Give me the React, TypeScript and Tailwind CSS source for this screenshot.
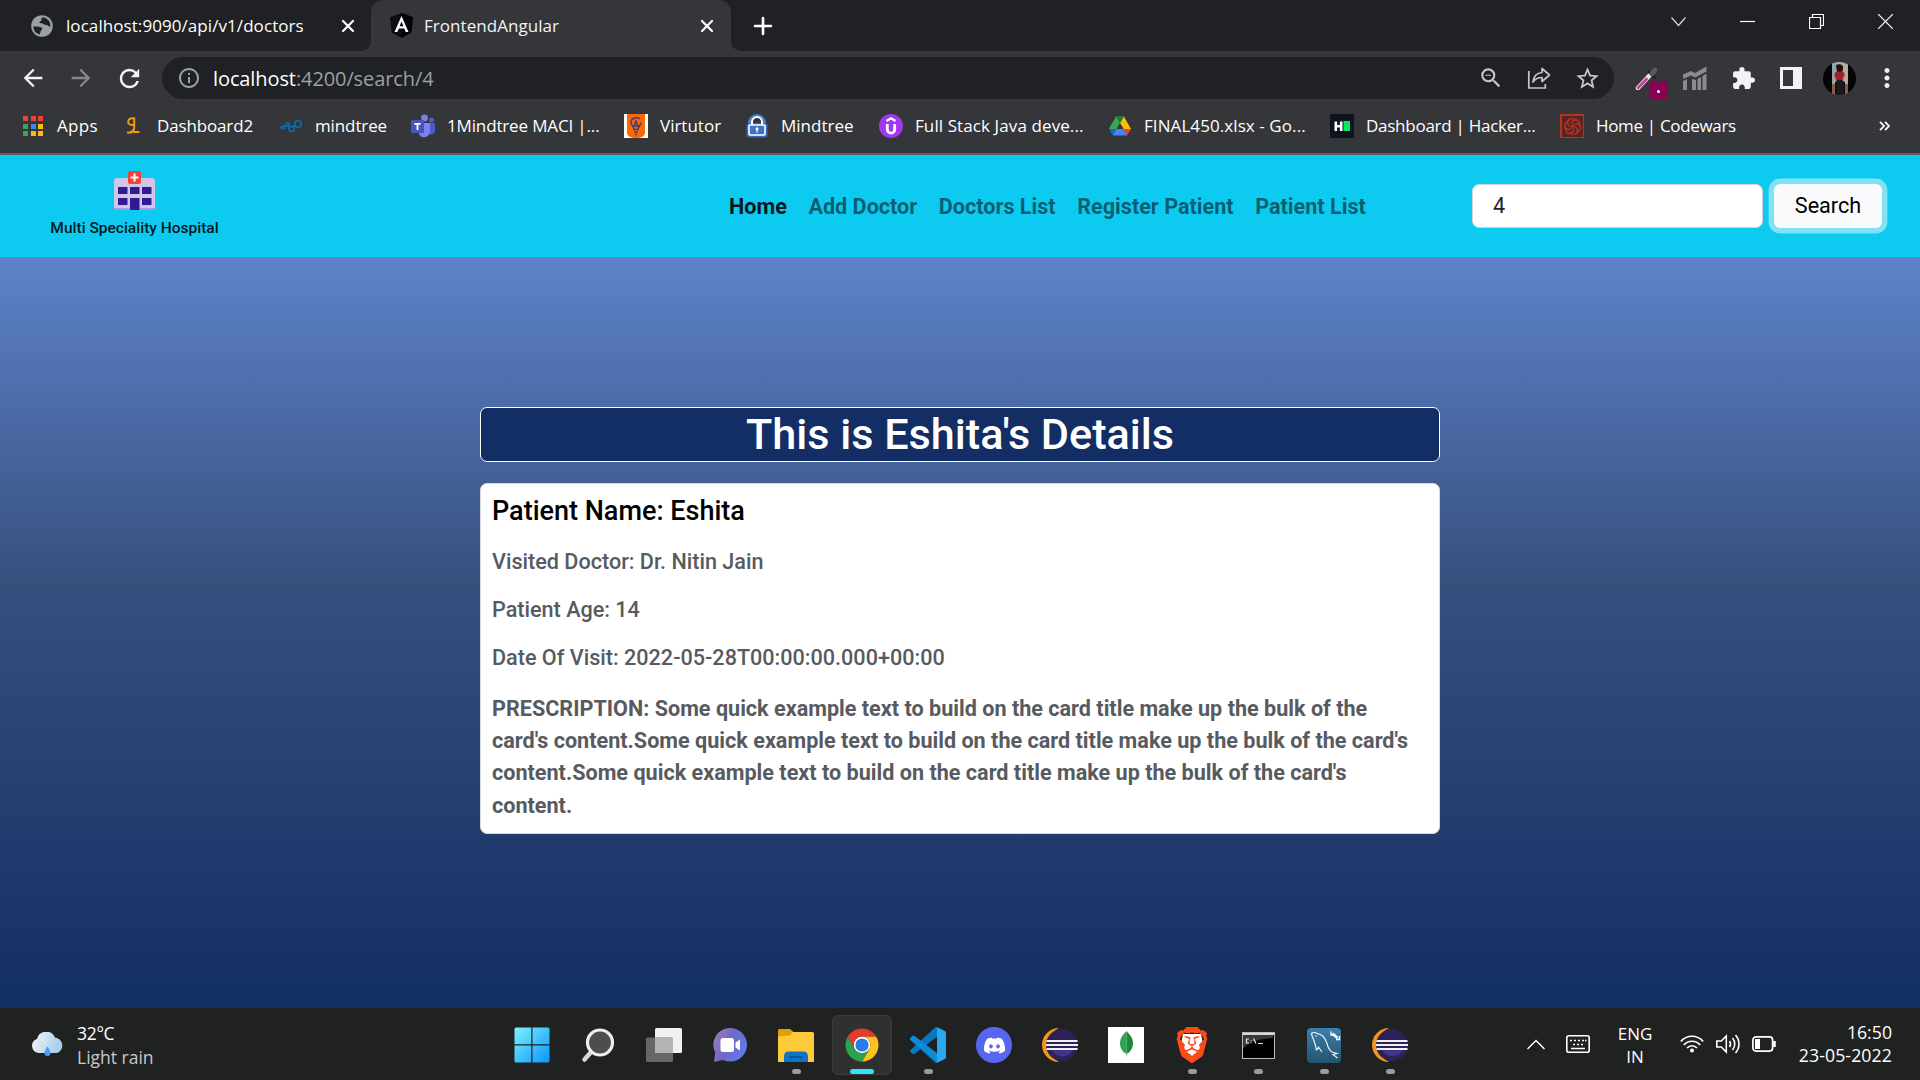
import type { ReactNode } from "react";
import {
  MdArrowBack,
  MdArrowForward,
  MdExtension,
  MdInfoOutline,
  MdRefresh,
  MdStarBorder,
  MdZoomOut,
  MdMoreVert,
} from "react-icons/md";
import { SiBrave, SiCodewars } from "react-icons/si";
import { FaDiscord } from "react-icons/fa";

/* ---------- Browser icons ---------- */

function GlobeIcon() {
  return (
    <svg width="22" height="22" viewBox="0 0 22 22">
      <circle cx="11" cy="11" r="10.8" fill="#9aa0a6" />
      <path
        d="M12.5 2.2c-1.6.5-2.6 1.5-2 2.8.5 1.1-1.5.8-2 1.9-.5 1.2 1 1.3 2.2 1.3 1.5 0 2 1.2 3.2 1.6 1.5.4 2.3 0 3.3 1 .8 1 1.6.6 2.3.4A8.8 8.8 0 0 0 12.5 2.2zM2.3 11.500c2 .1 3.700-.1 5.400.3 1.500.4 3.400.5 3.500 2 .1 1.500-1.500 1.400-1.700 2.700-.2 1-.2 2-.8 3A8.800 8.800 0 0 1 2.300 11.500z"
        fill="#202124"
      />
    </svg>
  );
}

function AngularIcon() {
  return (
    <svg width="25" height="25" viewBox="0 0 25 25">
      <path d="M12.500 0 24 4.200 22.300 19.500 12.500 25 2.700 19.500 1 4.200z" fill="#0b0d12" />
      <path d="M12.500 0 24 4.200 22.300 19.500 12.500 25z" fill="#020308" />
      <path
        d="M12.500 3 5.500 19h2.800l1.400-3.600h5.600l1.400 3.600h2.800zm0 5.400 1.900 4.800h-3.800z"
        fill="#fff"
      />
    </svg>
  );
}

function CloseIcon() {
  return (
    <svg width="14" height="14" viewBox="0 0 14 14" stroke="#fff" strokeWidth="2.200" strokeLinecap="round">
      <path d="M2 2l10 10M12 2L2 12" />
    </svg>
  );
}

function ShareIcon() {
  return (
    <svg width="24" height="24" viewBox="0 0 24 24" fill="none" stroke="#c4c7ca" strokeWidth="1.700">
      <path d="M1.800 5v17h16.500V18" />
      <path d="M15 2.500 22.500 9 15 15.500v-4c-4.500 0-7 1.500-9 4.500.6-5.500 4-9 9-9.500z" strokeLinejoin="round" />
    </svg>
  );
}

function EyedropperIcon() {
  return (
    <span className="relative flex size-6">
      <svg width="24" height="24" viewBox="0 0 24 24" strokeLinecap="round">
        <path d="M15 9 3 22" stroke="#e8e8e8" strokeWidth="4.500" />
        <path d="M11.500 13 3.200 21.800" stroke="#d03a9c" strokeWidth="2.800" />
        <path d="M14 6l5.500 5.500" stroke="#222" strokeWidth="2.500" />
        <path d="M17 7.500 20 4" stroke="#5a5a5c" strokeWidth="5" />
      </svg>
      <span className="absolute left-[14px] top-[15px] flex h-[18px] w-[19px] items-center justify-center rounded-[4px] bg-[#8a0052]">
        <span className="mt-[3px] size-[3px] rounded-full bg-white" />
      </span>
    </span>
  );
}

function AnalyticsIcon() {
  return (
    <svg width="24" height="24" viewBox="0 0 24 24" fill="#8b8b8d">
      <path d="M0 8.500 8 5l4 2L23.500.500v5L12 11.500 8 9.500 0 13zM0 15l4-2V24H0zM9 13l4 1v10H9zM14.500 13l3.500-2v13h-3.500zM19.500 10l4-2.500V24h-4z" />
    </svg>
  );
}

function Avatar() {
  return (
    <svg width="33" height="33" viewBox="0 0 33 33">
      <defs>
        <clipPath id="avatar-clip">
          <circle cx="16.500" cy="16.500" r="16.500" />
        </clipPath>
      </defs>
      <g clipPath="url(#avatar-clip)">
        <rect width="33" height="33" fill="#050505" />
        <rect x="9" width="16" height="33" fill="#b8aaa0" />
        <rect x="9" width="4.500" height="22" fill="#8fa7b5" />
        <rect x="9" y="22" width="16" height="11" fill="#8c5a48" />
        <rect x="12" y="20" width="10" height="13" fill="#101012" />
        <path d="M13 3c4-2 8 0 7 4l-1 4h-5z" fill="#1c1413" />
        <path d="M12 10.500c3-1.500 7-1.500 9 0l1 4-2.500 4h-6L11 15z" fill="#9c1f33" />
        <path d="M13 18h8l-1 15h-6z" fill="#1b1a1e" />
        <path d="M11 14l2 5M22 13l-2 6" stroke="#c58b6e" strokeWidth="1.500" />
      </g>
    </svg>
  );
}

/* ---------- Bookmark icons ---------- */

function AppsIcon() {
  const colors = ["#ea4335", "#ea4335", "#ea4335", "#34a853", "#2f8df5", "#fbbc04", "#34a853", "#fbbc04", "#fbbc04"];
  return (
    <span className="grid grid-cols-3 gap-[2.500px] pl-[2px]">
      {colors.map((c, i) => (
        <span key={i} className="size-[5px]" style={{ backgroundColor: c }} />
      ))}
    </span>
  );
}

function ScalerIcon() {
  return (
    <svg width="24" height="24" viewBox="0 0 24 24" fill="none" stroke="#f59a0c" strokeWidth="2">
      <path d="M13 4.500C9.500 3.500 7.200 5.200 7.200 7.700c0 3.300 3.300 3.600 5.800 3.100" />
      <path d="M13.200 3.500V14c-.5 3.500-3.500 5-7.200 4.600M10.500 17.300c2.500.8 5.500 1 8 .6" />
    </svg>
  );
}

function MindtreeDotsIcon() {
  return (
    <svg width="24" height="24" viewBox="0 0 24 24" fill="none" stroke="#1268a5" strokeWidth="1.800">
      <circle cx="19" cy="10" r="3.300" />
      <circle cx="12.500" cy="15" r="2.600" />
      <circle cx="8.500" cy="10.500" r="1.700" />
      <circle cx="4.500" cy="13.500" r="1.300" />
      <path d="M1 13.500h2M5.500 12.500l1.500-1M9.500 12l1 1.500M14.500 13l2-1.300" />
    </svg>
  );
}

function TeamsIcon() {
  return (
    <svg width="24" height="24" viewBox="0 0 24 24">
      <circle cx="20.500" cy="6" r="2.600" fill="#5059c9" />
      <circle cx="13.500" cy="4" r="3.400" fill="#7b83eb" />
      <path d="M16 9h8v7a4 4 0 0 1-8 1z" fill="#5059c9" />
      <path d="M8 9h11v8.500a6 6 0 0 1-11 3z" fill="#7b83eb" />
      <rect y="6" width="13" height="13" rx="1" fill="#4b53bc" />
      <path d="M3.300 9h6.400v1.800H7.400V16H5.600v-5.200H3.300z" fill="#fff" />
    </svg>
  );
}

function VirtutorIcon() {
  return (
    <svg width="24" height="24" viewBox="0 0 24 24">
      <rect width="24" height="24" fill="#fff" />
      <path d="M3 0h18v19c0 3-4 5-9 5s-9-2-9-5z" fill="#f96a05" />
      <path d="M16 5c-3-3-9-1-9 3.500 0 3 3 4 3 7h4c0-3 3-4 3-7M12 7l-2 5h4zM10 18h4M11 20.500h2" fill="none" stroke="#4a3b78" strokeWidth="1.500" />
    </svg>
  );
}

function LockIcon() {
  return (
    <svg width="24" height="24" viewBox="0 0 24 24">
      <path d="M5 9a7 7 0 0 1 14 0v2h-14z" fill="none" stroke="#4a82cc" strokeWidth="4" />
      <rect x="1.500" y="9" width="21" height="14.500" rx="3" fill="#3a68b8" />
      <path d="M7 11V8a5 5 0 0 1 10 0v3" fill="none" stroke="#fff" strokeWidth="2" />
      <rect x="4" y="11" width="16" height="10" rx="1" fill="#4272c4" stroke="#fff" strokeWidth="1.600" />
      <circle cx="12" cy="14.700" r="1.500" fill="#fff" />
      <path d="M12 15v3.500" stroke="#fff" strokeWidth="1.200" />
    </svg>
  );
}

function UdemyIcon() {
  return (
    <svg width="24" height="24" viewBox="0 0 24 24">
      <circle cx="12" cy="12" r="12" fill="#a435f0" />
      <path d="M7.500 7 12 4.200 16.500 7" fill="none" stroke="#fff" strokeWidth="2.200" />
      <path d="M8.300 10v5.500a3.700 3.700 0 0 0 7.400 0V10" fill="none" stroke="#fff" strokeWidth="2.800" />
    </svg>
  );
}

function DriveIcon() {
  return (
    <svg width="24" height="24" viewBox="0 0 24 24">
      <path d="M8 2.500h8L12 9.200 5.500 21.500 1 14.500z" fill="#34a853" />
      <path d="M8 2.500h8l-4 7z" fill="#188038" />
      <path d="M16 2.500 23 15h-7.500L12 9.300z" fill="#fbbc04" />
      <path d="M12 9.300 15.500 15h-7z" fill="#35363a" />
      <path d="M8.500 15 5 21.500h14L15.500 15z" fill="#4285f4" />
      <path d="M1 15h7.500L5 21.500z" fill="#1967d2" />
      <path d="M15.500 15H23l-4 6.500z" fill="#ea4335" />
    </svg>
  );
}

function HackerRankIcon() {
  return (
    <svg width="24" height="24" viewBox="0 0 24 24">
      <rect width="24" height="24" fill="#0e141e" />
      <path d="M4.500 7.500h2.600V11h2.800V7.500h2.600v9.500H9.900v-3.500H7.100V17H4.500z" fill="#fff" />
      <rect x="13.500" y="7" width="6.500" height="10" fill="#00ea64" />
    </svg>
  );
}

function CodewarsIcon() {
  return (
    <span className="flex size-6 items-center justify-center bg-[#b1361e] text-[#5b2226]">
      <SiCodewars size={21} />
    </span>
  );
}

/* ---------- Page icons ---------- */

function HospitalIcon() {
  return (
    <svg width="41" height="39" viewBox="0 0 41 39">
      <path d="M0 10a3 3 0 0 1 3-3h35a3 3 0 0 1 3 3v29H0z" fill="#d1c4e9" />
      <path d="M0 37h41v2H0z" fill="#a99bd6" />
      <g fill="#311b92">
        <path d="M4 16h9.500v7H4zM16 16h9.500v7H16zM28 16h9.500v7H28zM4 27h9.500v7H4zM28 27h9.500v7H28zM16 27h9.500v12H16z" />
      </g>
      <rect x="14" y="0" width="13" height="13" rx="2" fill="#f44336" />
      <path d="M20.500 2.500v8M16.500 6.500h8" stroke="#fff" strokeWidth="2" />
    </svg>
  );
}

/* ---------- Taskbar icons ---------- */

function WeatherIcon() {
  return (
    <svg width="34" height="26" viewBox="0 0 34 26">
      <defs>
        <linearGradient id="cloud" x1="0" y1="0" x2="1" y2="0.300">
          <stop offset="0" stopColor="#f4f7fa" />
          <stop offset="1" stopColor="#a9cfea" />
        </linearGradient>
      </defs>
      <path d="M7.500 21a7.200 7.200 0 0 1-1.500-14A9.500 9.500 0 0 1 24 5.500 8 8 0 0 1 26 21z" fill="url(#cloud)" />
      <path d="M6 8c5-2 8 1 8.500 4" fill="none" stroke="#dbe8f2" strokeWidth="2" />
      <path d="M16.500 14.500c2 3 3 4.500 3 6.500a3 3 0 0 1-6 0c0-2 1-3.500 3-6.500z" fill="#4b9ff2" />
    </svg>
  );
}

function WindowsIcon() {
  return (
    <svg width="36" height="36" viewBox="0 0 36 36">
      <defs>
        <linearGradient id="win" x1="0" y1="0" x2="1" y2="1">
          <stop offset="0" stopColor="#7cf3ff" />
          <stop offset="1" stopColor="#0a94fb" />
        </linearGradient>
      </defs>
      <path d="M2 .500h15.300v16.800H.500V2A1.500 1.500 0 0 1 2 .500zM18.500.500H34A1.500 1.500 0 0 1 35.500 2v15.300h-17zM.500 18.500h16.800v17H2A1.500 1.500 0 0 1 .500 34zM18.500 18.500h17V34a1.500 1.500 0 0 1-1.500 1.500H18.500z" fill="url(#win)" />
    </svg>
  );
}

function SearchTaskIcon() {
  return (
    <svg width="34" height="36" viewBox="0 0 34 36">
      <path d="M11 24 3.500 32.500" stroke="#d5d7da" strokeWidth="4.500" strokeLinecap="round" />
      <circle cx="19" cy="15.500" r="12.500" fill="#4b4d4e" stroke="#eceef0" strokeWidth="3.200" />
    </svg>
  );
}

function TaskViewIcon() {
  return (
    <svg width="36" height="34" viewBox="0 0 36 34">
      <rect x="9" width="27" height="25" rx="1.500" fill="#f1f1f1" />
      <rect y="9.500" width="27" height="24.500" rx="1.500" fill="#666" />
      <path d="M9 9.500h18V25H9z" fill="#b4b4b4" />
    </svg>
  );
}

function ChatIcon() {
  return (
    <svg width="34" height="34" viewBox="0 0 34 34">
      <defs>
        <linearGradient id="chat" x1="0" y1="0.100" x2="1" y2="0.600">
          <stop offset="0" stopColor="#a57bb8" />
          <stop offset="0.500" stopColor="#6f68c8" />
          <stop offset="1" stopColor="#5f7be8" />
        </linearGradient>
      </defs>
      <path d="M17.500 0A16.800 16.800 0 1 1 10 32L1 34l1.200-9.500A16.800 16.800 0 0 1 17.500 0z" fill="url(#chat)" />
      <rect x="7.500" y="10" width="13.500" height="14" rx="2.500" fill="#fff" />
      <path d="M22.500 14.500 27 11.500v11l-4.500-3z" fill="#fff" />
    </svg>
  );
}

function FolderIcon() {
  return (
    <svg width="36" height="33" viewBox="0 0 36 33">
      <path d="M0 1.500A1.500 1.500 0 0 1 1.500 0H12l4 3.500H34v8H0z" fill="#e2a008" />
      <path d="M0 7.500 12 6.500l3-3.500h19.500A1.500 1.500 0 0 1 36 4.500V33H0z" fill="#fdcb3a" />
      <path d="M6 33v-6a4.500 4.500 0 0 1 4.500-4.500h15A4.500 4.500 0 0 1 30 27v6z" fill="#0f74c6" />
      <path d="M11 28h14" stroke="#0a4f93" strokeWidth="1.500" />
    </svg>
  );
}

function ChromeIcon() {
  return (
    <svg width="36" height="36" viewBox="0 0 48 48">
      <path d="M4.950 13A22 22 0 0 1 43.050 13H24A11 11 0 0 0 14.470 29.500z" fill="#e33b2e" />
      <path d="M43.050 13A22 22 0 0 1 24 46L33.530 29.500A11 11 0 0 0 24 13z" fill="#fcc31e" />
      <path d="M24 46A22 22 0 0 1 4.950 13L14.470 29.500A11 11 0 0 0 33.530 29.500z" fill="#2ba24c" />
      <circle cx="24" cy="24" r="11" fill="#fff" />
      <circle cx="24" cy="24" r="8.800" fill="#2c7be5" />
    </svg>
  );
}

function VsCodeIcon() {
  return (
    <svg width="36" height="36" viewBox="0 0 24 24">
      <path
        d="M23.150 2.587L18.210.210a1.494 1.494 0 0 0-1.705.290l-9.460 8.630-4.120-3.128a.999.999 0 0 0-1.276.057L.327 7.261A1 1 0 0 0 .326 8.740L3.899 12 .326 15.260a1 1 0 0 0 .001 1.479L1.650 17.940a.999.999 0 0 0 1.276.057l4.120-3.128 9.460 8.630a1.492 1.492 0 0 0 1.704.290l4.942-2.377A1.500 1.500 0 0 0 24 20.060V3.939a1.500 1.500 0 0 0-.850-1.352zm-5.146 14.861L10.826 12l7.178-5.448v10.896z"
        fill="#0877bf"
      />
      <path d="M.326 7.261 1.650 6.060a1 1 0 0 1 1.276-.057l15.078 11.445v5.900L.326 8.740a1 1 0 0 1 0-1.479z" fill="#0d8bd9" />
      <path d="M18.004.200 23.150 2.587A1.500 1.500 0 0 1 24 3.939V20.060a1.500 1.500 0 0 1-.850 1.352l-5.146 2.400z" fill="#29a8ef" />
    </svg>
  );
}

function DiscordIcon() {
  return (
    <span className="flex size-9 items-center justify-center rounded-full bg-[#5865f2] text-white">
      <FaDiscord size={23} />
    </span>
  );
}

function EclipseIcon() {
  return (
    <svg width="36" height="36" viewBox="0 0 36 36">
      <path d="M17 1A17 17 0 0 0 17 35 19 19 0 0 1 17 1z" fill="#f7941e" />
      <circle cx="20" cy="18" r="16" fill="#2c2255" />
      <path d="M10 23h21a12 12 0 0 1-21 0z" fill="#41348a" />
      <path d="M4.500 14h31M4 18h32M4.500 22h31" stroke="#f1f0f7" strokeWidth="2.200" />
    </svg>
  );
}

function MongoIcon() {
  return (
    <svg width="36" height="36" viewBox="0 0 36 36">
      <rect width="36" height="36" fill="#fff" />
      <path d="M18.500 4C14 8.500 12 12 12 16.500s2.500 8 6.500 11z" fill="#2fa44f" />
      <path d="M18.500 4C23 8.500 25 12 25 16.500s-2.500 8-6.500 11z" fill="#1b8a3c" />
      <path d="M18.700 25v4.500" stroke="#c9b9a8" />
    </svg>
  );
}

function BraveIcon() {
  return (
    <span className="grid size-9 place-items-center">
      <svg className="col-start-1 row-start-1" width="36" height="36" viewBox="0 0 36 36">
        <path d="M9 7h18l2 10-4 9-7 5-7-5-4-9z" fill="#fff" />
      </svg>
      <SiBrave className="col-start-1 row-start-1" size={36} color="#fb4a1c" />
    </span>
  );
}

function CmdIcon() {
  return (
    <span className="flex h-[27px] w-[33px] flex-col border-[1.500px] border-[#b9bcbf] bg-black">
      <span className="h-[2px] bg-[#d6d9dc]" />
      <svg width="30" height="21" viewBox="0 0 30 21">
        <path d="M0 0h30v3C16 4 6 7 0 14z" fill="#3a3a3a" />
        <path d="M6 4H3.500v4H6M8 5v.8M8 7.500v.8M10.500 3.500l2.500 5M15 8.500h5" fill="none" stroke="#e8e8e8" strokeWidth="1.200" />
      </svg>
    </span>
  );
}

function WorkbenchIcon() {
  return (
    <svg width="34" height="35" viewBox="0 0 34 35">
      <defs>
        <linearGradient id="wb" x1="0" y1="0" x2="0" y2="1">
          <stop offset="0" stopColor="#3d7fae" />
          <stop offset="1" stopColor="#24536f" />
        </linearGradient>
      </defs>
      <rect width="34" height="35" rx="4" fill="url(#wb)" />
      <path
        d="M9.500 22.500C9 19 8 15 6.500 11.500 5.500 9 4.500 7 4.500 5.500c1-1.500 4-1 6 .2 4.500.5 8 5.300 9.500 9.800 1 4 2.500 7 5 8.500l5 1.500-4 1 4.500 3.500M9.500 22.500l2-3.500 3.500 5M8.500 7.500l1 1"
        fill="none"
        stroke="#e9f2f7"
        strokeWidth="1.200"
      />
      <path d="M25.500 5.500l5 4.500" stroke="#fff" strokeWidth="2.600" />
      <path d="M24 3.500v3.500h3M29 11.500h3.500V8" fill="none" stroke="#fff" strokeWidth="1.300" />
    </svg>
  );
}

/* ---------- Data ---------- */

type Bookmark = { label: string; icon: ReactNode; box: string; text: string };

const bookmarks: Bookmark[] = [
  { label: "Apps", icon: <AppsIcon />, box: "w-[100px]", text: "tracking-[0.3px]" },
  { label: "Dashboard2", icon: <ScalerIcon />, box: "w-[158px]", text: "tracking-[-0.15px]" },
  { label: "mindtree", icon: <MindtreeDotsIcon />, box: "w-[132px]", text: "tracking-[-0.12px]" },
  { label: "1Mindtree MACI |...", icon: <TeamsIcon />, box: "w-[213px]", text: "tracking-[-0.15px]" },
  { label: "Virtutor", icon: <VirtutorIcon />, box: "w-[121px]", text: "" },
  { label: "Mindtree", icon: <LockIcon />, box: "w-[134px]", text: "" },
  { label: "Full Stack Java deve...", icon: <UdemyIcon />, box: "w-[229px]", text: "tracking-[0.1px]" },
  { label: "FINAL450.xlsx - Go...", icon: <DriveIcon />, box: "w-[222px]", text: "tracking-[0.08px]" },
  { label: "Dashboard | Hacker...", icon: <HackerRankIcon />, box: "w-[230px]", text: "tracking-[-0.26px]" },
  { label: "Home | Codewars", icon: <CodewarsIcon />, box: "w-[200px]", text: "tracking-[-0.33px]" },
];

const navLinks = ["Home", "Add Doctor", "Doctors List", "Register Patient", "Patient List"];

const patientFacts = [
  "Visited Doctor: Dr. Nitin Jain",
  "Patient Age: 14",
  "Date Of Visit: 2022-05-28T00:00:00.000+00:00",
];

type TaskItem = { name: string; icon: ReactNode; state?: "running" | "active" };

const taskItems: TaskItem[] = [
  { name: "start", icon: <WindowsIcon /> },
  { name: "search", icon: <SearchTaskIcon /> },
  { name: "task-view", icon: <TaskViewIcon /> },
  { name: "chat", icon: <ChatIcon /> },
  { name: "explorer", icon: <FolderIcon />, state: "running" },
  { name: "chrome", icon: <ChromeIcon />, state: "active" },
  { name: "vscode", icon: <VsCodeIcon />, state: "running" },
  { name: "discord", icon: <DiscordIcon /> },
  { name: "eclipse", icon: <EclipseIcon /> },
  { name: "mongodb", icon: <MongoIcon /> },
  { name: "brave", icon: <BraveIcon />, state: "running" },
  { name: "cmd", icon: <CmdIcon />, state: "running" },
  { name: "workbench", icon: <WorkbenchIcon />, state: "running" },
  { name: "eclipse-2", icon: <EclipseIcon />, state: "running" },
];

/* ---------- Sections ---------- */

function TabStrip() {
  return (
    <div className="flex h-[51px] bg-[#202124] text-[17px] text-white">
      <div className="flex w-[371px] items-center pl-[31px] pr-[16px]">
        <GlobeIcon />
        <span className="ml-[13px] flex-1 whitespace-nowrap tracking-[0.07px]">localhost:9090/api/v1/doctors</span>
        <CloseIcon />
      </div>
      <div className="relative flex w-[360px] items-center rounded-t-[12px] bg-[#35363a] pl-[18px] pr-[17px]">
        <span className="absolute bottom-0 left-[-10px] size-[10px] bg-[#35363a]">
          <span className="block size-full rounded-br-full bg-[#202124]" />
        </span>
        <span className="absolute bottom-0 right-[-10px] size-[10px] bg-[#35363a]">
          <span className="block size-full rounded-bl-full bg-[#202124]" />
        </span>
        <AngularIcon />
        <span className="ml-[10px] flex-1 whitespace-nowrap tracking-[0.05px] text-[#f1f3f4]">FrontendAngular</span>
        <CloseIcon />
      </div>
      <div className="flex flex-1 items-center pl-[22px]">
        <svg width="20" height="20" viewBox="0 0 20 20" stroke="#fff" strokeWidth="2.600" strokeLinecap="round">
          <path d="M10 2v16M2 10h16" />
        </svg>
      </div>
      <div className="flex h-[43px] items-center gap-[54px] pr-[27px]">
        <svg width="15" height="15" viewBox="0 0 15 15" fill="none" stroke="#d8d8d8" strokeWidth="1.200">
          <path d="M.500 3.500l7 8 7-8" />
        </svg>
        <svg width="15" height="15" viewBox="0 0 15 15" stroke="#fff" strokeWidth="1.200">
          <path d="M0 7.500h15" />
        </svg>
        <svg width="15" height="15" viewBox="0 0 15 15" fill="none" stroke="#fff" strokeWidth="1.200">
          <path d="M.500 3.500h11v11h-11zM3.500 3.500v-3h11v11h-3" />
        </svg>
        <svg width="15" height="15" viewBox="0 0 15 15" stroke="#fff" strokeWidth="1.200">
          <path d="M0 0l15 15M15 0L0 15" />
        </svg>
      </div>
    </div>
  );
}

function Toolbar() {
  return (
    <div className="flex h-[54px] items-center">
      <div className="flex w-[162px] gap-[20px] pl-[19px] text-[#f1f3f4]">
        <MdArrowBack size={28} />
        <MdArrowForward size={28} className="text-[#85878a]" />
        <MdRefresh size={29} />
      </div>
      <div className="flex h-[42px] w-[1452px] items-center rounded-full bg-[#202124] pl-[15px] pr-[13px] text-[20px] tracking-[-0.1px] text-[#9aa0a6]">
        <MdInfoOutline size={24} />
        <span className="ml-[12px] flex-1 pt-px">
          <span className="text-white">localhost</span>
          <span>:4200/search/4</span>
        </span>
        <div className="flex items-center gap-[23px] text-[#c4c7ca]">
          <MdZoomOut size={26} />
          <ShareIcon />
          <MdStarBorder size={27} />
        </div>
      </div>
      <div className="ml-[9px] grid w-[288px] grid-cols-6 place-items-center text-[#f1f3f4]">
        <EyedropperIcon />
        <AnalyticsIcon />
        <MdExtension size={25} />
        <span className="flex size-[22px] justify-start border-[3px] border-[#f1f3f4] bg-[#f1f3f4]">
          <span className="h-full w-[10px] bg-[#35363a]" />
        </span>
        <Avatar />
        <MdMoreVert size={30} />
      </div>
    </div>
  );
}

function BookmarksBar() {
  return (
    <div className="flex h-[48px] items-center pb-[6px] pl-[21px] pr-[30px] text-[17px] text-white">
      {bookmarks.map((b) => (
        <div key={b.label} className={`flex shrink-0 items-center ${b.box}`}>
          <span className="flex w-[36px] shrink-0">{b.icon}</span>
          <span className={`whitespace-nowrap ${b.text}`}>{b.label}</span>
        </div>
      ))}
      <svg className="ml-auto" width="11" height="10" viewBox="0 0 11 10" fill="none" stroke="#fff" strokeWidth="1.800">
        <path d="M1 .800l4 4.200-4 4.200M6 .800l4 4.200-4 4.200" />
      </svg>
    </div>
  );
}

function NavBar() {
  return (
    <nav className="flex h-[102px] items-center bg-[#0dcaf0] font-[Roboto,sans-serif] text-[21.600px]">
      <div className="flex w-[269px] flex-col items-center pb-[5px]">
        <HospitalIcon />
        <span className="mt-[9px] text-[15.500px] font-medium leading-[18px] text-black/90">Multi Speciality Hospital</span>
      </div>
      <div className="ml-[460px] flex w-[743px] gap-[21.600px] pt-[2px] font-bold">
        {navLinks.map((l, i) => (
          <span key={l} className={i === 0 ? "whitespace-nowrap text-black/90" : "whitespace-nowrap text-black/55"}>
            {l}
          </span>
        ))}
      </div>
      <div className="flex h-[44px] w-[291px] items-center rounded-[7px] border border-[#ced4da] bg-white pl-[20px] pt-px text-[#212529]">
        4
      </div>
      <button className="ml-[11px] h-[44px] w-[108px] rounded-[6px] bg-[#f9fafb] pt-px text-black ring-[5.400px] ring-[#f8f9fa]/50">
        Search
      </button>
    </nav>
  );
}

function PatientDetails() {
  return (
    <main className="flex h-[751px] flex-col items-center bg-[linear-gradient(180deg,#5d83cb_0%,#38507e_43%,#132e64_100%)] pt-[150px] font-[Roboto,sans-serif]">
      <h1 className="flex h-[55px] w-[960px] items-center justify-center rounded-[7px] border border-white bg-[#132e64] text-[43.200px] font-medium leading-[52px] text-white">
        This is Eshita's Details
      </h1>
      <section className="mt-[21px] h-[351px] w-[960px] rounded-[7px] border border-[#d9d9d9] bg-white px-[11px] pt-[11px] text-[21.600px] text-[#575b5f]">
        <h5 className="text-[27px] font-medium leading-[32.400px] text-black">Patient Name: Eshita</h5>
        <div className="mt-[22px] flex flex-col gap-[21.600px] font-medium leading-[26px]">
          {patientFacts.map((f) => (
            <h6 key={f}>{f}</h6>
          ))}
        </div>
        <p className="mt-[22px] font-bold leading-[32.400px]">
          PRESCRIPTION: Some quick example text to build on the card title make up the bulk of the card's content.Some
          quick example text to build on the card title make up the bulk of the card's content.Some quick example text
          to build on the card title make up the bulk of the card's content.
        </p>
      </section>
    </main>
  );
}

function TaskButton({ item }: { item: TaskItem }) {
  const active = item.state === "active";
  return (
    <div className="flex w-[66px] justify-center">
      <div
        className={
          active
            ? "relative flex size-[60px] items-center justify-center rounded-[6px] border border-[#3c3c3d] bg-[#303031]"
            : "relative flex size-[60px] items-center justify-center"
        }
      >
        {item.icon}
        {item.state && (
          <span
            className={
              active
                ? "absolute bottom-0 h-[5px] w-[24px] rounded-full bg-[#2fe3f8]"
                : "absolute bottom-[1px] h-[5px] w-[9px] rounded-full bg-[#9b9b9b]"
            }
          />
        )}
      </div>
    </div>
  );
}

function Taskbar() {
  return (
    <footer className="flex h-[72px] items-center bg-[#202121] text-[17.500px] leading-[24px] text-white">
      <div className="flex w-[499px] items-center gap-[12px] pl-[31px] pt-[2px]">
        <WeatherIcon />
        <div className="flex flex-col">
          <span className="tracking-[-0.3px]">32°C</span>
          <span className="text-[#c9c9c9]">Light rain</span>
        </div>
      </div>
      <div className="flex pt-[2px]">
        {taskItems.map((t) => (
          <TaskButton key={t.name} item={t} />
        ))}
      </div>
      <div className="ml-auto flex items-center pr-[28px]">
        <svg width="18" height="11" viewBox="0 0 18 11" fill="none" stroke="#fff" strokeWidth="1.500">
          <path d="M.500 10 9 1.500l8.500 8.500" />
        </svg>
        <svg className="ml-[21px]" width="24" height="18" viewBox="0 0 24 18" fill="none" stroke="#fff" strokeWidth="1.600">
          <rect x=".800" y=".800" width="22.400" height="16.400" rx="2" />
          <path d="M4 5.500h2M8 5.500h2M12 5.500h2M16 5.500h2M19 5.500h1.500M7 9.500h2M11 9.500h2M15 9.500h2M5 13.500h14" />
        </svg>
        <div className="ml-[27px] flex w-[36px] flex-col items-center pt-px text-[17px] leading-[23px]">
          <span>ENG</span>
          <span>IN</span>
        </div>
        <svg className="ml-[27px]" width="24" height="18" viewBox="0 0 24 18" fill="none" stroke="#fff" strokeWidth="1.700">
          <path d="M.800 6.500c6-7 16.400-7 22.400 0M3.800 10c4.500-5 11.900-5 16.400 0M7 13c3-3 7-3 10 0" />
          <circle cx="12" cy="15.500" r="2" fill="#fff" stroke="none" />
        </svg>
        <svg className="ml-[12px]" width="24" height="20" viewBox="0 0 24 20" fill="none" stroke="#fff" strokeWidth="1.600">
          <path d="M.800 7v6h4.500l5 5V2l-5 5zM13.500 7c1.300 1.800 1.300 4.200 0 6M16.500 4c3 3.500 3 8.500 0 12M19.500 1c4.600 5.200 4.600 12.800 0 18" />
        </svg>
        <svg className="ml-[12px]" width="24" height="16" viewBox="0 0 24 16" fill="none" stroke="#fff" strokeWidth="1.700">
          <rect x=".900" y=".900" width="19.700" height="14.200" rx="3" />
          <path d="M3 3h5v10H3z" fill="#fff" stroke="none" />
          <path d="M22.500 5v6" strokeWidth="2.500" />
        </svg>
        <div className="ml-[20px] flex w-[96px] flex-col items-end text-[17.700px] leading-[23px]">
          <span>16:50</span>
          <span className="tracking-[0.1px]">23-05-2022</span>
        </div>
      </div>
    </footer>
  );
}

export default function App() {
  return (
    <div className="h-[1080px] w-[1920px] overflow-hidden font-['Open_Sans',sans-serif]">
      <header className="h-[155px] border-b-2 border-[#5f6063] bg-[#35363a]">
        <TabStrip />
        <Toolbar />
        <BookmarksBar />
      </header>
      <NavBar />
      <PatientDetails />
      <Taskbar />
    </div>
  );
}
